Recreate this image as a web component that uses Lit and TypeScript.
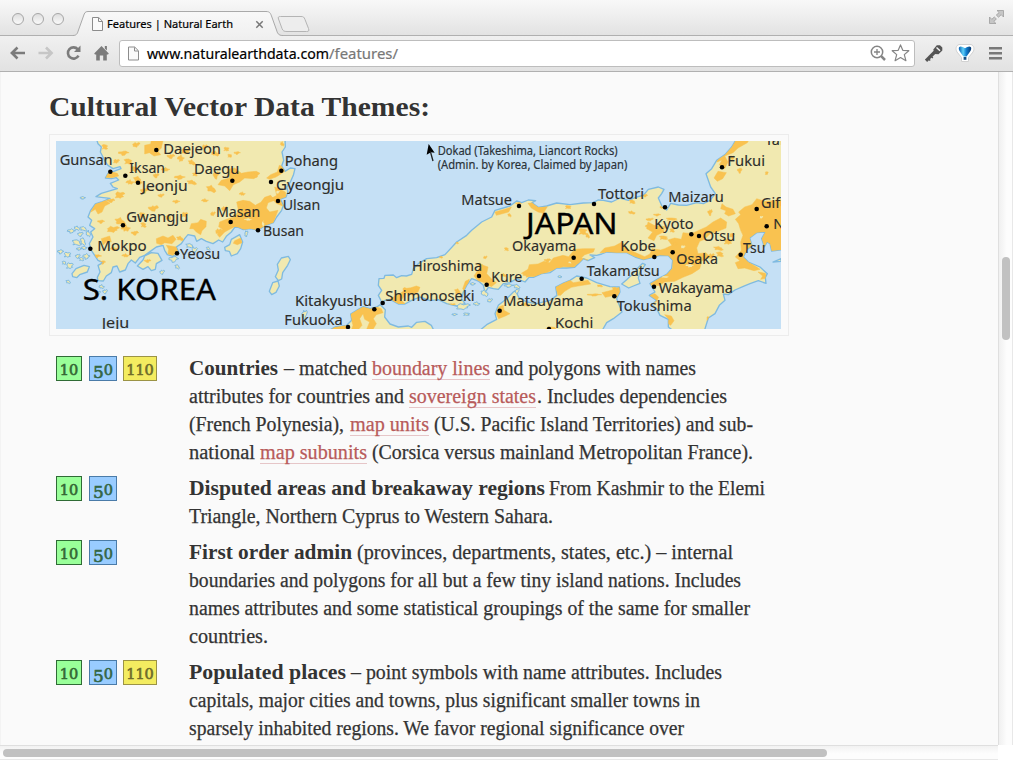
import { LitElement, html, svg, css } from "lit";
import { customElement } from "lit/decorators.js";

type Seg = [number, number, string, string?];
type Blob = [number, number, number, number];

/* Widens each [data-w] run to its measured width. */
function fitRuns(root: ShadowRoot) {
  root.querySelectorAll<HTMLElement>("[data-w]").forEach((el) => {
    const inner = el.firstElementChild as HTMLElement;
    const target = Number(el.dataset.w);
    inner.style.display = "inline-block";
    inner.style.transformOrigin = "0 50%";
    const natural = inner.getBoundingClientRect().width;
    inner.style.transform = `scaleX(${target / natural})`;
  });
}

function pts(a: string) {
  return "M" + a.trim().split(/\s+/).join("L") + "Z";
}

/* Small irregular outline around a centre. */
function patch([x, y, rx, ry]: Blob) {
  const n = 13;
  const p: string[] = [];
  for (let i = 0; i < n; i++) {
    const t = (i / n) * Math.PI * 2;
    const k = 0.8 + 0.34 * Math.sin(x * 1.7 + y * 2.3 + i * i * 1.9);
    p.push(`${(x + Math.cos(t) * rx * k).toFixed(1)},${(y + Math.sin(t) * ry * k).toFixed(1)}`);
  }
  return "M" + p.join("L") + "Z";
}
const grown = ([x, y, rx, ry]: Blob): Blob => [x, y, rx * 1.25, ry * 1.3];

const KOREA = pts(`145,20 150,35 160,45 157,60 165,75 171,88 180,100 195,110 216,104 219,110 195,119 180,124 172,138 190,140 205,137 212,144
 187,154 195,165 208,170 180,178 160,184 144,194 160,196 186,199 160,210 142,216 128,235 120,255 131,265 125,280 140,290 128,300 135,315 124,335
 130,355 140,370 150,385 165,392 150,400 156,420 148,436 150,446 166,447 175,432 190,422 195,405 207,402 215,420 232,414 240,395 250,384 262,393
 275,376 290,370 310,356 325,345 345,340 350,355 358,368 375,373 392,360 385,345 400,335 410,320 420,308 440,312 446,328 460,320 475,328 495,335
 512,324 524,330 535,313 550,300 560,286 571,286 586,293 606,290 631,294 651,281 676,272 686,255 701,235 706,220 697,201 714,195 720,180 716,165
 727,150 736,130 741,110 727,108 711,118 701,102 707,85 702,60 712,45 711,20`);
const HONSHU = pts(`1001,510 991,490 1001,475 991,460 993,440 1008,439 1011,430 1036,429 1046,437 1061,431 1075,432 1091,427 1096,410 1111,395 1136,380 1166,377
 1191,368 1226,330 1256,310 1271,295 1301,270 1331,255 1341,235 1366,228 1386,222 1406,207 1421,212 1441,204 1463,206 1452,212 1471,226 1496,222
 1526,213 1566,218 1606,213 1636,212 1650,204 1666,205 1691,210 1716,198 1741,205 1766,195 1786,190 1801,172 1831,165 1848,172 1841,185 1831,198 1843,225
 1856,234 1868,214 1891,219 1916,220 1946,212 1966,215 1986,205 2002,185 1988,165 1974,125 1991,110 2006,85 2031,68 2051,45 2066,20
 2215,20 2215,352 2171,357 2166,335 2157,330 2149,345 2141,320 2152,300 2126,302 2105,318 2112,340 2096,355 2086,375 2101,390 2136,405 2158,425
 2152,436 2154,454 2131,446 2106,455 2086,463 2061,474 2041,488 2026,486 2031,505 2014,520 2001,545 1981,558 1968,600
 1881,600 1861,585 1861,562 1836,550 1826,530 1811,518 1826,505 1804,490 1821,480 1806,455 1831,440 1856,427 1871,410 1874,385 1861,371 1836,370
 1806,378 1786,383 1761,375 1736,362 1706,362 1676,360 1661,366 1646,370 1626,369 1640,377 1620,386 1606,380 1591,395 1580,406 1556,408 1526,408 1506,422
 1481,425 1456,436 1443,436 1431,450 1406,440 1386,452 1366,455 1351,472 1336,470 1321,466 1311,482 1306,460 1291,447 1271,440 1256,460 1246,480
 1241,500 1251,515 1226,522 1196,515 1171,503 1146,506 1116,495 1091,505 1071,516 1051,516 1026,502 1011,505`);
const SHIKOKU = pts(`1290,600 1316,578 1346,562 1341,545 1351,520 1376,500 1396,480 1403,476 1412,496 1436,510 1466,515 1506,505 1527,490 1523,465 1546,453
 1566,445 1586,432 1616,438 1646,452 1686,464 1714,465 1716,480 1706,500 1714,520 1722,540 1696,560 1676,572 1660,600`);
const KYUSHU = pts(`835,600 861,585 896,580 911,565 908,546 931,532 946,524 966,530 986,525 997,518 1012,533 1010,555 1026,576 1051,585 1081,582 1091,586
 1106,571 1131,568 1150,580 1160,600`);
const ISLES = [
  pts("72,425 84,410 108,400 124,404 118,420 95,428 86,437 74,434"),
  pts("268,402 285,384 290,372 310,362 330,364 342,385 325,395 322,412 310,416 300,404 285,412"),
  pts("530,346 545,338 550,322 575,308 584,330 578,350 568,365 550,372 544,358 532,356"),
  pts("700,378 721,373 727,383 719,400 704,422 701,441 691,446 682,434 691,414 688,397"),
  pts("674,452 690,447 694,462 684,481 671,488 664,478"),
  pts("1721,456 1736,443 1750,430 1766,412 1784,394 1792,398 1776,420 1771,438 1776,454 1756,462 1742,468"),
  pts("2175,390 2199,380 2199,388"),
].join("");
const ISLETS: Blob[] = [
  [70, 296, 9, 6], [86, 289, 8, 5], [105, 291, 9, 5], [98, 306, 7, 5], [120, 305, 6, 8], [38, 358, 7, 6], [58, 369, 9, 6], [85, 333, 12, 7], [104, 330, 7, 9],
  [108, 347, 7, 5], [93, 350, 6, 4], [115, 372, 8, 8], [90, 372, 6, 5], [100, 382, 6, 4], [65, 402, 9, 7], [48, 393, 5, 4], [60, 450, 6, 4], [104, 197, 6, 4],
  [160, 464, 7, 5], [172, 478, 6, 5], [152, 482, 5, 4], [378, 380, 11, 8], [387, 405, 6, 5], [343, 420, 6, 5], [424, 342, 10, 5], [440, 354, 7, 6],
  [480, 350, 5, 4], [595, 305, 4, 7], [770, 547, 7, 11], [1245, 524, 18, 7], [1285, 515, 8, 5], [1220, 547, 6, 3], [1255, 547, 8, 3],
  [1308, 484, 10, 8], [1326, 505, 7, 4], [1382, 460, 10, 5], [1405, 464, 9, 5], [1408, 477, 5, 6], [1535, 434, 5, 3], [1274, 455, 6, 4],
];
const URBAN = [
  pts("290,40 308,36 310,25 345,25 340,48 330,58 338,68 318,72 304,62 290,66"),
  pts("540,112 560,108 580,124 600,120 625,118 636,124 618,140 590,138 575,150 556,158 545,176 530,162 510,158 520,145 545,138"),
  pts("165,200 186,214 170,222 162,240 150,246 142,232 128,240 142,216"),
  pts("325,320 345,312 360,318 375,310 384,322 372,335 350,332 340,338 326,334"),
  pts("430,275 450,272 458,262 475,268 474,284 462,296 458,308 445,300 436,290 425,290"),
  pts("515,270 535,262 556,256 572,238 566,210 585,205 605,208 622,220 640,210 650,196 668,190 680,205 660,212 655,228 665,240 690,235 676,272 651,281 631,294 590,293 560,284 548,290 530,300 515,316 508,308 524,292 512,284"),
  pts("656,138 668,128 688,120 694,100 706,104 712,116 700,125 684,135 664,142"),
  pts("680,165 694,170 712,180 716,198 696,202 704,222 684,214 672,198 686,190"),
  pts("160,320 185,312 190,330 176,328 165,340"),
  pts("560,326 578,318 582,332 568,338 556,334"),
  pts("355,340 385,345 390,358 375,370 360,366 362,352"),
  pts("911,565 908,546 931,532 946,524 966,530 986,525 1000,530 1005,542 985,548 976,560 985,575 975,592 955,594 965,570 950,562 945,545 935,560 942,580 930,594 910,594 915,580"),
  pts("842,596 861,585 896,580 900,596"),
  pts("1086,468 1105,462 1116,466 1110,480 1090,488 1076,480 1070,490 1060,505 1071,515 1051,516 1026,502 1045,490"),
  pts("1291,412 1305,400 1320,405 1316,425 1330,440 1345,452 1330,464 1311,452 1290,446 1278,432"),
  pts("1252,448 1264,442 1258,464 1250,478 1244,470"),
  pts("1341,240 1370,232 1390,225 1382,240 1360,246 1345,250"),
  pts("1456,212 1475,226 1498,224 1486,244 1470,240 1450,228 1440,214"),
  pts("1420,424 1440,412 1444,398 1470,396 1488,388 1505,392 1516,378 1545,370 1562,374 1580,352 1606,350 1640,350 1636,360 1610,368 1600,378 1620,384 1588,396 1578,406 1545,404 1526,410 1500,420 1460,434 1440,432"),
  pts("1656,362 1670,348 1700,342 1722,330 1740,352 1790,374 1806,366 1812,350 1838,354 1850,350 1872,340 1860,324 1880,318 1900,322 1905,302 1930,305 1950,296 1975,285 1995,270 2018,258 2036,270 2034,288 2010,298 1985,306 1970,322 1955,328 1946,348 1950,365 1974,362 1986,376 1962,386 1955,410 1932,425 1905,436 1880,448 1850,450 1835,460 1812,462 1806,455 1831,440 1858,425 1874,408 1874,385 1861,371 1806,380 1786,384 1736,364 1676,362"),
  pts("1800,270 1818,280 1850,284 1846,300 1826,310 1818,326 1800,318 1814,300 1796,290"),
  pts("2051,45 2066,20 2105,20 2098,32 2070,48 2055,62 2030,72 2040,90 2030,110 2014,98 2022,84 2006,90 2018,72"),
  pts("2010,118 2035,122 2024,140 2008,148 1998,138"),
  pts("2090,225 2112,218 2126,200 2150,208 2175,206 2215,202 2215,352 2171,357 2166,335 2157,330 2149,345 2141,320 2152,300 2126,302 2105,318 2112,340 2096,355 2086,375 2101,390 2126,405 2136,412 2118,416 2090,408 2070,410 2062,392 2076,386 2062,375 2080,355 2078,330 2085,310 2078,295 2072,275 2062,262 2078,248 2072,240"),
  pts("2022,215 2034,225 2055,232 2062,245 2042,252 2030,245 2034,236 2018,230"),
  pts("1530,490 1523,465 1546,453 1566,445 1576,452 1620,445 1628,456 1590,462 1570,466 1550,478 1538,490"),
  pts("1345,545 1352,525 1366,520 1368,535 1386,545 1372,552 1352,560"),
  pts("1662,482 1690,475 1714,466 1716,480 1704,498 1690,492 1672,496"),
  pts("1806,490 1821,485 1832,496 1824,510 1810,515"),
  pts("1850,548 1870,552 1878,566 1868,580 1858,574 1862,562"),
  pts("1490,594 1500,584 1520,586 1528,596"),
  pts("2130,420 2152,424 2156,438 2138,442 2144,432"),
  pts("178,125 192,120 208,124 212,132 190,137 172,136"),
].join("");
const TOWNS: Blob[] = [
  [170, 46, 10, 8], [228, 62, 15, 8], [265, 38, 12, 7], [370, 72, 12, 7], [412, 58, 16, 8], [430, 92, 12, 8], [398, 78, 10, 12], [470, 45, 9, 7], [500, 65, 14, 8], [535, 52, 9, 6],
  [240, 90, 14, 9], [205, 88, 10, 6], [258, 112, 10, 8], [268, 146, 14, 12], [245, 150, 12, 8], [290, 175, 12, 8], [215, 190, 16, 10], [190, 205, 12, 6], [325, 130, 9, 7],
  [352, 112, 12, 7], [395, 135, 15, 8], [430, 152, 16, 7], [488, 172, 16, 11], [505, 128, 9, 12], [470, 205, 10, 6], [318, 228, 16, 9], [282, 250, 10, 8], [215, 270, 18, 12],
  [195, 292, 20, 9], [232, 288, 14, 12], [160, 268, 10, 6], [262, 302, 11, 7], [286, 280, 9, 8], [385, 208, 10, 6], [360, 258, 10, 6], [410, 248, 10, 7], [340, 190, 10, 5],
  [145, 372, 16, 6], [165, 390, 8, 6], [196, 350, 11, 6], [232, 370, 11, 6], [395, 320, 12, 7], [495, 245, 8, 6], [530, 230, 10, 7], [582, 185, 9, 6], [585, 215, 16, 8],
  [568, 62, 9, 5], [545, 72, 7, 5], [702, 36, 6, 7], [615, 130, 14, 8], [648, 210, 8, 12], [300, 386, 10, 5], [512, 298, 10, 8], [440, 128, 8, 5],
  [1075, 475, 14, 8], [1178, 375, 6, 4], [1375, 352, 7, 5], [1312, 376, 6, 4], [1225, 332, 7, 4], [1295, 398, 10, 5], [1384, 250, 6, 5], [1412, 214, 8, 5], [1560, 226, 10, 5], [1604, 300, 14, 10],
  [1618, 312, 7, 7], [1500, 384, 10, 6], [1752, 210, 10, 6], [1792, 190, 7, 5], [1842, 226, 8, 5], [1750, 242, 12, 5], [1806, 262, 12, 4], [1828, 248, 10, 4], [1870, 262, 18, 4], [1800, 282, 8, 7],
  [1846, 318, 14, 6], [1880, 335, 10, 7], [1872, 296, 8, 6], [1987, 240, 7, 10], [2052, 78, 8, 6], [2076, 114, 7, 9], [2156, 124, 5, 5], [2010, 350, 16, 6], [2040, 330, 14, 8], [2052, 310, 8, 6],
  [2015, 368, 12, 8], [1990, 372, 10, 8], [1432, 518, 14, 6], [1456, 508, 10, 5], [1640, 488, 20, 4], [1212, 518, 12, 4], [1228, 480, 10, 9], [1980, 560, 4, 6], [1655, 462, 9, 3],
  [1440, 428, 14, 8], [1366, 430, 9, 5], [1700, 470, 10, 5],
];
const BARE: Blob[] = [
  [600, 262, 12, 5], [645, 275, 4, 12], [690, 180, 6, 5], [1925, 400, 12, 7], [1850, 435, 14, 3], [1905, 345, 8, 5], [2140, 256, 6, 4], [1565, 392, 6, 3], [1960, 560, 5, 5],
];

const LABELS: [string, number, number, number][] = [
  ["Gunsan", 37, 193, 100], ["Daejeon", 348, 518, 67], ["Iksan", 246, 350, 123], ["Daegu", 440, 573, 127], ["Jeonju", 283, 418, 177],
  ["Gwangju", 237, 420, 271], ["Masan", 506, 636, 256], ["Mokpo", 150, 295, 356], ["Yeosu", 398, 516, 382], ["Jeju", 163, 243, 587],
  ["Pohang", 712, 869, 102], ["Gyeongju", 686, 887, 174], ["Ulsan", 706, 816, 235], ["Busan", 647, 767, 312], ["Kitakyushu", 743, 971, 522],
  ["Fukuoka", 711, 883, 579], ["Shimonoseki", 1014, 1279, 508], ["Matsue", 1242, 1391, 220], ["Okayama", 1394, 1584, 358], ["Hiroshima", 1094, 1301, 418],
  ["Kure", 1332, 1422, 450], ["Takamatsu", 1618, 1834, 433], ["Matsuyama", 1368, 1605, 522], ["Kochi", 1523, 1635, 588], ["Tottori", 1652, 1787, 201],
  ["Maizaru", 1863, 2026, 211], ["Fukui", 2040, 2150, 102], ["Gifu", 2141, 2222, 228], ["N", 2178, 2208, 291], ["Kyoto", 1821, 1936, 290],
  ["Otsu", 1966, 2061, 327], ["Kobe", 1719, 1823, 357], ["Osaka", 1887, 2009, 396], ["Tsu", 2087, 2151, 364], ["Wakayama", 1834, 2054, 484],
  ["Tokushima", 1708, 1930, 538], ["Tak", 2153, 2218, 38],
];
const DOTS: [number, number][] = [
  [325, 54], [187, 119], [232, 131], [270, 152], [553, 146], [225, 280], [548, 270], [127, 350], [387, 364],
  [700, 116], [669, 150], [690, 207], [630, 295], [979, 532], [1004, 513], [900, 585],
  [1413, 222], [1638, 216], [1577, 377], [1293, 432], [1316, 458], [1601, 440], [1355, 536], [1503, 591],
  [1851, 226], [2022, 106], [2126, 231], [2156, 283], [1930, 307], [1953, 312], [1819, 375], [1874, 361], [2078, 368], [1818, 464], [1699, 493],
];

@customElement("region-map")
export class RegionMap extends LitElement {
  static styles = css`
    :host { display: block; width: 725px; height: 188px; }
    svg { display: block; font-family: "Noto Sans", "Open Sans", sans-serif; }
    .sea { fill: #c5e0f5; }
    .land { fill: #f1e9b0; stroke: #7fbae0; stroke-width: 4; stroke-linejoin: round; }
    .isle { fill: #f1e9b0; stroke: #7fbae0; stroke-width: 3; stroke-linejoin: round; }
    .fill { fill: #f1e9b0; }
    .urban { fill: #f9c250; stroke: #f9c250; stroke-width: 1.5; stroke-linejoin: round; }
    .dot { fill: #000; }
    .city { font-size: 45px; fill: #2d2d2a; stroke: #2d2d2a; stroke-width: 0.4; }
    .note { font-size: 36px; fill: #2a3238; stroke: #2a3238; stroke-width: 0.5; }
    .nation { font-size: 85px; fill: #000; stroke: #000; stroke-width: 1; }
    .arrow { fill: #000; }
    .shaft { fill: none; stroke: #222; stroke-width: 4; }
  `;
  render() {
    const main = KOREA + HONSHU + SHIKOKU + KYUSHU + ISLES;
    const islets = ISLETS.map(grown).map(patch).join("");
    return html`<svg width="725" height="188" viewBox="24 27 2175 564">
      <defs><clipPath id="land"><path d=${main} /></clipPath></defs>
      <rect class="sea" x="24" y="27" width="2175" height="564" />
      <path class="land" d=${main} />
      <path class="isle" d=${islets} />
      <g clip-path="url(#land)">
        <path class="urban" d=${URBAN + TOWNS.map(patch).join("")} />
        <path class="fill" d=${BARE.map(patch).join("")} />
      </g>
      ${DOTS.map(([x, y]) => svg`<circle class="dot" cx=${x} cy=${y} r="6.8" />`)}
      ${LABELS.map(([t, a, b, y]) => svg`<text class="city" x=${a - 2} y=${y} textLength=${b - a + 3} lengthAdjust="spacingAndGlyphs">${t}</text>`)}
      <text class="note" x="1169" y="68" textLength="540" lengthAdjust="spacingAndGlyphs">Dokad (Takeshima, Liancort Rocks)</text>
      <text class="note" x="1169" y="112" textLength="569" lengthAdjust="spacingAndGlyphs">(Admin. by Korea, Claimed by Japan)</text>
      <text class="nation" x="104" y="503" textLength="400" lengthAdjust="spacingAndGlyphs">S. KOREA</text>
      <text class="nation" x="1434" y="307" textLength="275" lengthAdjust="spacingAndGlyphs">JAPAN</text>
      <path class="arrow" d="M1142 36L1160 62L1149 61L1136 68Z" />
      <path class="shaft" d="M1147 58L1155 87" />
    </svg>`;
  }
}

interface Entry { scales: number[]; lines: Seg[][]; }
const ENTRIES: Entry[] = [
  { scales: [10, 50, 110], lines: [
    [[189, 278, "Countries", "b"], [284, 367, "– matched"], [372, 490, "boundary lines", "a"], [495, 696, "and polygons with names"]],
    [[189, 404, "attributes for countries and"], [409, 536, "sovereign states", "a"], [537, 727, ". Includes dependencies"]],
    [[189, 344, "(French Polynesia),"], [350, 429, "map units", "a"], [434, 753, "(U.S. Pacific Island Territories) and sub-"]],
    [[189, 255, "national"], [260, 367, "map subunits", "a"], [372, 753, "(Corsica versus mainland Metropolitan France)."]],
  ] },
  { scales: [10, 50], lines: [
    [[189, 545, "Disputed areas and breakaway regions", "b"], [549, 765, "From Kashmir to the Elemi"]],
    [[189, 553, "Triangle, Northern Cyprus to Western Sahara."]],
  ] },
  { scales: [10, 50], lines: [
    [[189, 352, "First order admin", "b"], [357, 733, "(provinces, departments, states, etc.) – internal"]],
    [[189, 741, "boundaries and polygons for all but a few tiny island nations. Includes"]],
    [[189, 750, "names attributes and some statistical groupings of the same for smaller"]],
    [[189, 268, "countries."]],
  ] },
  { scales: [10, 50, 110], lines: [
    [[189, 346, "Populated places", "b"], [351, 722, "– point symbols with name attributes. Includes"]],
    [[189, 700, "capitals, major cities and towns, plus significant smaller towns in"]],
    [[189, 684, "sparsely inhabited regions. We favor regional significance over"]],
  ] },
];

@customElement("theme-list")
export class ThemeList extends LitElement {
  static styles = css`
    :host { display: flex; flex-direction: column; gap: 8px; font-family: "Liberation Serif", serif; font-size: 20px; line-height: 26px; color: #333; }
    .entry { display: grid; grid-template-columns: 133px 1fr; }
    .scales { display: flex; padding-top: 1px; align-items: flex-start; }
    .scale { box-sizing: border-box; height: 25px; border: 1px solid; display: flex; justify-content: center; font: 14.5px/27px "DejaVu Serif", serif; -webkit-text-stroke: 0.6px; }
    .s10 { width: 26px; margin-right: 7px; background: #99ff99; border-color: #2f6b35; color: #336633; }
    .s50 { width: 28px; margin-right: 6px; background: #99ccff; border-color: #4a7ba8; color: #336644; }
    .s110 { width: 34px; background: #f3ec60; border-color: #9b9345; color: #6d6a2a; }
    .low { font-size: 17px; line-height: 30px; }
    .line { display: flex; height: 28px; white-space: pre; }
    .run { flex: none; height: 28px; -webkit-text-stroke: 0.25px; }
    .b { font-weight: 700; -webkit-text-stroke: 0; }
    .a { height: 24px; color: #b85b5a; border-bottom: 1px solid #e6c6c8; }
  `;
  firstUpdated() { fitRuns(this.shadowRoot!); }
  line(segs: Seg[]) {
    let at = 189;
    return html`<div class="line">${segs.map(([a, b, t, k]) => {
      const gap = a - at;
      at = b;
      return html`<span class="run ${k ?? ""}" data-w=${b - a} style="width:${b - a}px;margin-left:${gap}px"><span>${t}</span></span>`;
    })}</div>`;
  }
  render() {
    return ENTRIES.map((e) => html`<div class="entry">
      <div class="scales">${e.scales.map((s) => html`<span class="scale s${s}">${s === 50 ? html`<span class="low">5</span><span>0</span>` : s}</span>`)}</div>
      <div>${e.lines.map((l) => this.line(l))}</div>
    </div>`);
  }
}

@customElement("browser-bar")
export class BrowserBar extends LitElement {
  static styles = css`
    :host { display: block; font-family: "Noto Sans", sans-serif; }
    .strip { height: 36px; display: flex; align-items: flex-start; background: linear-gradient(#f8f8f8, #e2e2e2); box-shadow: inset 0 -1px #b0b0b0; }
    .lights { display: flex; gap: 8px; padding: 13px 0 0 12px; width: 61px; }
    .light { box-sizing: border-box; width: 12px; height: 12px; border: 1px solid #a6a6a6; border-radius: 50%; background: linear-gradient(#dedede, #fafafa); }
    .tab { display: grid; width: 240px; height: 36px; }
    .tab > * { grid-area: 1 / 1; }
    .caption { display: flex; padding: 17px 0 0 19px; }
    .title { width: 126px; margin: -1px 0 0 4px; font-size: 11.5px; line-height: 16px; white-space: pre; color: #000; -webkit-text-stroke: 0.2px; }
    .close { margin: 2.5px 0 0 22px; }
    .grow { flex: 1; }
    .full { margin: 10px 9px 0 0; }
    .tools { box-sizing: border-box; height: 36px; display: flex; align-items: center; padding: 0 2px 1px 4px; background: linear-gradient(#f0f0f0, #e2e2e2); border-bottom: 1px solid #b0b0b0; }
    .cell { width: 28px; display: flex; justify-content: center; }
    .wide { width: 31px; }
    .box { box-sizing: border-box; display: flex; align-items: center; margin: 0 3px; flex: 1; height: 27px; background: #fff; border: 1px solid #bdbdbd; border-radius: 3px; font-size: 15px; line-height: 25px; padding: 0 4px 0 8px; white-space: pre; }
    .host { width: 182px; margin-left: 8px; color: #000; -webkit-text-stroke: 0.2px; }
    .path { width: 69px; color: #777; -webkit-text-stroke: 0.2px; }
    svg { display: block; }
  `;
  firstUpdated() { fitRuns(this.shadowRoot!); }
  page(w: number, h: number) {
    return html`<svg width=${w} height=${h} viewBox="0 0 11 14"><path d="M.5.5H6.7L10.5 4.3V13.5H.5Z" fill="#fafafa" stroke="#8c8c8c" /><path d="M6.5.8V4.5H10.3" fill="none" stroke="#8c8c8c" /></svg>`;
  }
  render() {
    return html`
      <div class="strip">
        <div class="lights"><span class="light"></span><span class="light"></span><span class="light"></span></div>
        <div class="tab">
          <svg width="240" height="36" viewBox="0 0 240 36">
            <defs><linearGradient id="t" x2="0" y2="1"><stop offset="0" stop-color="#f8f8f8" /><stop offset="1" stop-color="#f0f0f0" /></linearGradient></defs>
            <path d="M0 35.5C4 35.5 4.500 33 5.500 30L10.500 16C11.500 13 12 11.500 15 11.500H193C197 11.500 197.500 13.500 198.500 16L203.500 30C204.500 33 205 35.500 210 35.500V37H0Z" fill="url(#t)" />
            <path d="M0 35.500C4 35.500 4.500 33 5.500 30L10.500 16C11.500 13 12 11.500 15 11.500H193C197 11.500 197.500 13.500 198.500 16L203.500 30C204.500 33 205 35.500 210 35.500" fill="none" stroke="#a9a9a9" />
            <path d="M205.500 19C204.800 17 205.500 16.500 207.500 16.500H228C230.500 16.500 231 17 232 19.500L235.500 28.500C236.300 31 235.800 31.500 233.500 31.500H214C211 31.500 210 31 209 28.500Z" fill="#ededed" stroke="#b4b4b4" />
          </svg>
          <div class="caption">
            ${this.page(11, 14)}
            <span class="title" data-w="126"><span>Features | Natural Earth</span></span>
            <svg class="close" width="9" height="9" viewBox="0 0 9 9"><path d="M1.300 1.300L7.700 7.700M7.700 1.300L1.300 7.700" stroke="#777" stroke-width="1.500" /></svg>
          </div>
        </div>
        <span class="grow"></span>
        <svg class="full" width="15" height="14" viewBox="0 0 15 14"><path d="M8 .5H14.500V7L12.200 4.700L9.500 7.200L7.300 5L10.200 2.600ZM7 13.500H.500V7L2.800 9.300L5.300 7L7.400 9L4.800 11.400Z" fill="#c6c6c6" stroke="#9d9d9d" stroke-width=".8" /></svg>
      </div>
      <div class="tools">
        <span class="cell"><svg width="16" height="14" viewBox="0 0 16 14"><path d="M15 7H2M7.500 1.500L1.900 7L7.500 12.500" fill="none" stroke="#7b7b7b" stroke-width="2.600" /></svg></span>
        <span class="cell"><svg width="16" height="14" viewBox="0 0 16 14"><path d="M.500 7H13.500M8 1.500L13.600 7L8 12.500" fill="none" stroke="#c6c6c6" stroke-width="2.600" /></svg></span>
        <span class="cell"><svg width="16" height="16" viewBox="0 0 16 16"><path d="M11.800 4.300A5.600 5.600 0 1 0 12.500 10.600" fill="none" stroke="#7b7b7b" stroke-width="2.600" /><path d="M14.500 .5V7H8Z" fill="#7b7b7b" /></svg></span>
        <span class="cell"><svg width="16" height="16" viewBox="0 0 16 16"><path d="M7.500 1L14.800 8.500L14 9.500H12.800V15.500H9.200V10.500H5.800V15.500H2.200V9.500H1L.200 8.500ZM10.800 1H12.900V5.500L10.800 3.500Z" fill="#7b7b7b" /></svg></span>
        <div class="box">
          ${this.page(11, 15)}
          <span class="host" data-w="182"><span>www.naturalearthdata.com</span></span><span class="path" data-w="69"><span>/features/</span></span>
          <span class="grow"></span>
          <svg width="16" height="16" viewBox="0 0 16 16"><circle cx="7" cy="7" r="5.700" fill="none" stroke="#858585" stroke-width="1.500" /><path d="M4 7H10M7 4V10" stroke="#858585" stroke-width="1.300" /><path d="M11.200 11.200L15 15" stroke="#858585" stroke-width="2.500" /></svg>
          <svg width="24" height="18" viewBox="-5.500 0 24 18"><path d="M9 .9L11.300 6.300L17.300 6.700L12.800 10.600L14.400 16.700L9 13.500L3.600 16.700L5.200 10.600L.700 6.700L6.700 6.300Z" fill="#fff" stroke="#858585" stroke-width="1.200" stroke-linejoin="round" /></svg>
        </div>
        <span class="cell wide"><svg width="18" height="18" viewBox="0 0 18 18"><path d="M1 16.800L9.800 8" stroke="#555" stroke-width="3.200" /><path d="M3.200 14.500L5.200 16.500M5.800 12L7.800 14" stroke="#555" stroke-width="1.500" /><path d="M8.300 5.500L11.800 1.300H15L17.300 3.500V6.500L13.500 10.300L9.500 10Z" fill="#555" /><path d="M11.500 3.500L15 6.800" stroke="#f4f4f4" stroke-width="1.500" /></svg></span>
        <span class="cell wide"><svg width="20" height="20" viewBox="0 0 20 20">
          <defs><linearGradient id="b"><stop offset="0" stop-color="#0b5fb0" /><stop offset=".35" stop-color="#5fd0f8" /><stop offset=".6" stop-color="#1180d2" /><stop offset="1" stop-color="#06366e" /></linearGradient></defs>
          <path d="M4 1.500H16C19 2.500 19.800 6 18 9L13.500 14.500V18.500H6.500V14.500L2 9C.200 6 1 2.500 4 1.500Z" fill="#fff" stroke="#d2d2d2" />
          <path d="M4 4.200C6 2.800 7.500 4.200 10 5.200C12.500 4.200 14 2.800 16 4.200C17.200 7 13.500 10.500 11.500 13.500H8.500C6.500 10.500 2.800 7 4 4.200Z" fill="url(#b)" /><path d="M8.600 14H11.400V16.800H8.600Z" fill="#174f83" /></svg></span>
        <span class="cell wide"><svg width="13" height="14" viewBox="0 0 13 14"><path d="M0 2.200H13M0 7.200H13M0 12.200H13" stroke="#797979" stroke-width="2.600" /></svg></span>
      </div>`;
  }
}

@customElement("app-root")
export class AppRoot extends LitElement {
  static styles = css`
    :host { display: grid; grid-template: 72px 673px 15px / 998px 15px; width: 1013px; height: 760px; overflow: hidden; background: #fff; }
    .bar { grid-column: 1 / 3; }
    .view { box-sizing: border-box; overflow: hidden; background: #fafafa; padding: 18px 0 0 48px; border-left: 1px solid #f3f3f3; }
    .heading { margin: 0; height: 44px; width: 381px; font: 700 28px/34px "Liberation Serif", serif; color: #333; white-space: pre; }
    .frame { box-sizing: border-box; width: 740px; height: 202px; border: 1px solid #ececec; padding: 6px; margin-bottom: 19px; }
    .list { padding-left: 7px; }
    .vert { box-sizing: border-box; border-left: 1px solid #dfdfdf; border-right: 1px solid #e8e8e8; background: linear-gradient(90deg, #f0f0f0, #fdfdfd 60%); padding: 185px 0 0 3px; }
    .vthumb { width: 8px; height: 83px; border-radius: 4px; background: #c1c1c1; }
    .horz { box-sizing: border-box; border-top: 1px solid #dfdfdf; border-bottom: 1px solid #e8e8e8; background: linear-gradient(#f2f2f2, #fdfdfd 60%); padding: 3px 0 0 3px; }
    .hthumb { width: 824px; height: 8px; border-radius: 4px; background: #c1c1c1; }
  `;
  firstUpdated() { fitRuns(this.shadowRoot!); }
  render() {
    return html`
      <browser-bar class="bar"></browser-bar>
      <div class="view">
        <h2 class="heading" data-w="381"><span>Cultural Vector Data Themes:</span></h2>
        <div class="frame"><region-map></region-map></div>
        <theme-list class="list"></theme-list>
      </div>
      <div class="vert"><div class="vthumb"></div></div>
      <div class="horz"><div class="hthumb"></div></div>`;
  }
}
